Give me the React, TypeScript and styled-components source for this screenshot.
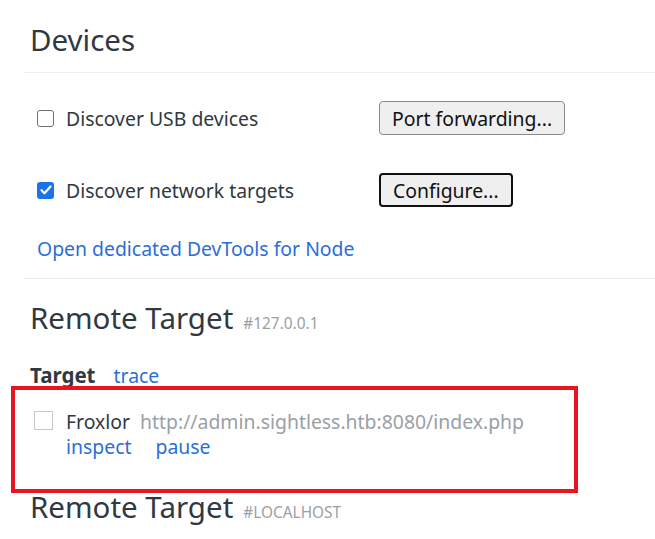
import React from "react";
import styled, { createGlobalStyle } from "styled-components";

const Global = createGlobalStyle`
  html, body { margin: 0; padding: 0; background: #fff; }
  body { font-family: "Noto Sans", "DejaVu Sans", sans-serif; color: #303942; }
`;

const Page = styled.div`
  position: relative;
  width: 655px;
  height: 539px;
  overflow: hidden;
  padding-left: 24px;
  box-sizing: border-box;
`;

const SectionTitle = styled.h1<{ $rule?: boolean; $top: number; $bottom: number }>`
  margin: 0;
  padding: ${(p) => p.$top}px 0 ${(p) => p.$bottom}px 6px;
  font-size: 29.5px;
  font-weight: 400;
  line-height: 34px;
  color: #303942;
  border-bottom: ${(p) => (p.$rule ? "1px solid #ececec" : "none")};
  display: flex;
  align-items: baseline;
  gap: 10px;
`;

const Sub = styled.span`
  font-size: 15.4px;
  color: #9aa0a6;
`;

const Options = styled.div`
  display: flex;
  flex-direction: column;
  padding: 28px 0 0 13px;
  border-bottom: 1px solid #ececec;
`;

const OptionRow = styled.div`
  display: grid;
  grid-template-columns: 342px auto;
  align-items: center;
  height: 34px;
  margin-bottom: 38px;
`;

const Label = styled.label`
  display: flex;
  align-items: center;
  gap: 12px;
  font-size: 19.4px;
  color: #303942;
`;

const Box = styled.span<{ $checked?: boolean }>`
  width: 17px;
  height: 17px;
  box-sizing: border-box;
  border-radius: 3px;
  border: ${(p) => (p.$checked ? "none" : "1.5px solid #6f6f6f")};
  background: ${(p) => (p.$checked ? "#1a73e8" : "#fff")};
  display: inline-flex;
  align-items: center;
  justify-content: center;
  flex: none;
`;

const Button = styled.button<{ $focused?: boolean }>`
  justify-self: start;
  height: 34px;
  padding: 0 12px;
  font-family: inherit;
  font-size: 19.4px;
  color: #111;
  background: #efefef;
  border: ${(p) => (p.$focused ? "2px solid #101010" : "1px solid #8a8a8a")};
  border-radius: 4px;
`;

const Link = styled.a`
  color: #2a6fd6;
  font-size: 19.4px;
  text-decoration: none;
  cursor: pointer;
`;

const NodeLink = styled(Link)`
  display: block;
  margin-top: -8px;
  padding-bottom: 17px;
  line-height: 24px;
`;

const TargetHeader = styled.div`
  display: flex;
  align-items: baseline;
  gap: 18px;
  padding: 21px 0 0 6px;
  line-height: 26px;
`;

const Bold = styled.span`
  font-weight: 700;
  font-size: 20.5px;
  color: #303942;
`;

const TargetItem = styled.div`
  display: flex;
  gap: 13px;
  padding: 20px 0 0 10px;
  height: 101px;
  box-sizing: border-box;
`;

const ItemBox = styled.span`
  width: 19px;
  height: 19px;
  box-sizing: border-box;
  border: 1px solid #c8c8c8;
  flex: none;
  margin-top: 2px;
`;

const ItemBody = styled.div`
  display: flex;
  flex-direction: column;
  font-size: 19.4px;
  line-height: 26px;
`;

const NameLine = styled.div`
  display: flex;
  gap: 10px;
`;

const Name = styled.span`
  color: #303942;
`;

const Url = styled.span`
  color: #9aa0a6;
`;

const Actions = styled.div`
  display: flex;
  gap: 24px;
  margin-top: -1px;
`;

const Highlight = styled.div`
  position: absolute;
  left: 11px;
  top: 386px;
  width: 567px;
  height: 107px;
  box-sizing: border-box;
  border: 4px solid #e8141f;
  pointer-events: none;
`;

export default function App() {
  return (
    <>
      <Global />
      <Page>
        <SectionTitle $rule $top={23} $bottom={15}>Devices</SectionTitle>
        <Options>
          <OptionRow>
            <Label>
              <Box />
              Discover USB devices
            </Label>
            <Button>Port forwarding...</Button>
          </OptionRow>
          <OptionRow>
            <Label>
              <Box $checked>
                <svg width="12" height="10" viewBox="0 0 12 10">
                  <path d="M1.5 5.2 L4.5 8.2 L10.5 1.5" fill="none" stroke="#fff" strokeWidth="2.2" strokeLinecap="round" strokeLinejoin="round" />
                </svg>
              </Box>
              Discover network targets
            </Label>
            <Button $focused>Configure...</Button>
          </OptionRow>
          <NodeLink>Open dedicated DevTools for Node</NodeLink>
        </Options>
        <SectionTitle $top={22} $bottom={0}>
          Remote Target <Sub>#127.0.0.1</Sub>
        </SectionTitle>
        <TargetHeader>
          <Bold>Target</Bold>
          <Link>trace</Link>
        </TargetHeader>
        <TargetItem>
          <ItemBox />
          <ItemBody>
            <NameLine>
              <Name>Froxlor</Name>
              <Url>http://admin.sightless.htb:8080/index.php</Url>
            </NameLine>
            <Actions>
              <Link>inspect</Link>
              <Link>pause</Link>
            </Actions>
          </ItemBody>
        </TargetItem>
        <SectionTitle $top={0} $bottom={0}>
          Remote Target <Sub>#LOCALHOST</Sub>
        </SectionTitle>
        <Highlight />
      </Page>
    </>
  );
}
